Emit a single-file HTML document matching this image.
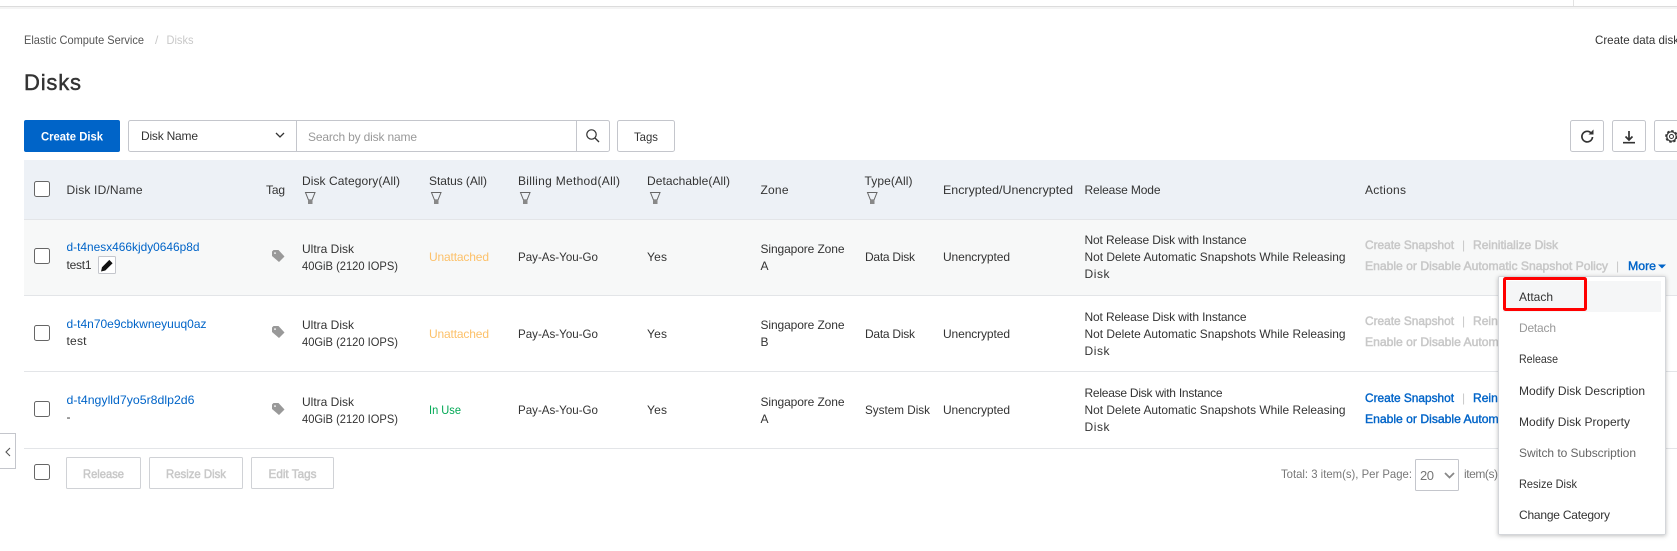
<!DOCTYPE html>
<html><head><meta charset="utf-8"><title>Disks</title>
<style>
html,body{margin:0;padding:0;background:#fff;width:1677px;height:551px;overflow:hidden}
svg{display:block}
text{font-family:"Liberation Sans",sans-serif;font-size:12px;fill:#333;white-space:pre}
.l{fill:#0064c8}.d{fill:#c8c8c8}
.dm{fill:#c8c8c8;stroke:#c8c8c8;stroke-width:.5px}
.lm{fill:#0064c8;stroke:#0064c8;stroke-width:.4px}
.b{fill:#fff;stroke:#c4c6cc}
.cb{fill:#fff;stroke:#666;rx:2px}
</style></head><body>
<svg width="1677" height="551" viewBox="0 0 1677 551" xmlns="http://www.w3.org/2000/svg">
<defs>
<filter id="s" x="-10%" y="-10%" width="120%" height="120%"><feDropShadow dx="0" dy="1" stdDeviation="2" flood-color="#000" flood-opacity=".25"/></filter>
<g id="fn"><path d="M.5.5H10L7 8H3.5Z" fill="none" stroke="#666" stroke-width="1"/><rect x="3" y="8" width="4.5" height="4" fill="#888"/></g>
<path id="tg" d="M0 1.5 1.5 0H6.5L12.5 6.5 7 12 0 6Z M3 2.200a.9.9 0 1 0 .01 0Z" fill="#999" fill-rule="evenodd"/>
</defs>
<rect x="0" y="6" width="1677" height="1" fill="#dcdcdc"/><rect y="7" width="1677" height="2" fill="#f4f4f4"/>
<rect x="1573" y="0" width="1" height="6" fill="#e3e3e3"/>

<text x="24" y="44" textLength="120" lengthAdjust="spacingAndGlyphs" style="fill:#555">Elastic Compute Service</text>
<text x="155" y="44" class="d">/</text>
<text x="166.500" y="44" textLength="27" lengthAdjust="spacingAndGlyphs" class="d">Disks</text>
<text x="1595" y="44" textLength="84" lengthAdjust="spacingAndGlyphs">Create data disk</text>
<text x="24" y="90" textLength="57" style="font-size:22px;stroke:#333;stroke-width:.45px">Disks</text>

<rect x="24" y="120" width="96" height="32" rx="2" fill="#0064c8"/>
<text x="41" y="140.500" textLength="62" lengthAdjust="spacingAndGlyphs" style="fill:#fff;font-weight:bold">Create Disk</text>
<rect x="128.500" y="120.500" width="481" height="31" rx="2" class="b"/>
<path d="M296.500 120v32M576.500 120v32" stroke="#c4c6cc"/>
<text x="141" y="140" textLength="57">Disk Name</text>
<path d="M276 133l4 4 4-4" fill="none" stroke="#333" stroke-width="1.300"/>
<text x="308" y="141" textLength="109" style="fill:#999">Search by disk name</text>
<circle cx="591.500" cy="134.500" r="4.700" fill="none" stroke="#333" stroke-width="1.200"/><path d="M595 138l4 4" stroke="#333" stroke-width="1.300"/>
<rect x="617.500" y="120.500" width="57" height="31" rx="2" class="b"/>
<text x="634" y="141" textLength="24" lengthAdjust="spacingAndGlyphs">Tags</text>

<rect x="1570.500" y="120.500" width="33" height="31" rx="2" class="b"/>
<path d="M1591.500 133.500a5.300 5.300 0 1 0 1 3.500" fill="none" stroke="#333" stroke-width="1.700"/><path d="M1588.500 134.500h5v-5z" fill="#333"/>
<rect x="1612.500" y="120.500" width="33" height="31" rx="2" class="b"/>
<path d="M1629 131v9M1625.500 136.500l3.500 3.500 3.500-3.500M1623 142.700h12" fill="none" stroke="#333" stroke-width="1.700"/>
<rect x="1654.500" y="120.500" width="33" height="31" rx="2" class="b"/>
<circle cx="1671.500" cy="136.500" r="2" fill="none" stroke="#333"/><circle cx="1671.500" cy="136.500" r="4.700" fill="none" stroke="#333" stroke-width="1.200"/><circle cx="1671.500" cy="136.500" r="5.700" fill="none" stroke="#333" stroke-width="1.300" stroke-dasharray="2.500 1.900"/>

<rect x="24" y="160" width="1653" height="59" fill="#edf1f6"/>
<rect x="24" y="219" width="1653" height="76" fill="#f7f8f8"/>
<path d="M24 219.500H1677M24 295.500H1677M24 371.500H1677M24 448.500H1677" stroke="#e3e5e8"/>

<rect x="34.500" y="181.500" width="15" height="15" class="cb"/>
<rect x="34.500" y="248.500" width="15" height="15" class="cb"/>
<rect x="34.500" y="325.500" width="15" height="15" class="cb"/>
<rect x="34.500" y="401.500" width="15" height="15" class="cb"/>
<rect x="34.500" y="464.500" width="15" height="15" class="cb"/>

<text x="66.500" y="194" textLength="76">Disk ID/Name</text>
<text x="266" y="194" textLength="19">Tag</text>
<text x="302" y="185" textLength="98">Disk Category(All)</text><use href="#fn" x="305" y="192"/>
<text x="429" y="185" textLength="58">Status (All)</text><use href="#fn" x="431" y="192"/>
<text x="518" y="185" textLength="102">Billing Method(All)</text><use href="#fn" x="520" y="192"/>
<text x="647" y="185" textLength="83">Detachable(All)</text><use href="#fn" x="650" y="192"/>
<text x="760.500" y="194" textLength="28">Zone</text>
<text x="864.500" y="185" textLength="48">Type(All)</text><use href="#fn" x="867" y="192"/>
<text x="943" y="194" textLength="130" lengthAdjust="spacingAndGlyphs">Encrypted/Unencrypted</text>
<text x="1084.500" y="194" textLength="76">Release Mode</text>
<text x="1365" y="194" textLength="41">Actions</text>

<!-- row 1 -->
<text x="66.500" y="251" textLength="133" lengthAdjust="spacingAndGlyphs" class="l">d-t4nesx466kjdy0646p8d</text>
<text x="66.500" y="269" textLength="25">test1</text>
<rect x="98.500" y="256.500" width="17" height="17" rx="1" fill="#fff" stroke="#c4c6cc"/>
<path d="M101 271.500l1-4.300 7.300-7.300 3.300 3.300-7.300 7.300z" fill="#111"/>
<use href="#tg" x="272" y="250"/>
<text x="302" y="253" textLength="52">Ultra Disk</text>
<text x="302" y="270" textLength="96" lengthAdjust="spacingAndGlyphs">40GiB (2120 IOPS)</text>
<text x="429" y="261" textLength="60" style="fill:#fcc16a">Unattached</text>
<text x="518" y="261" textLength="80" lengthAdjust="spacingAndGlyphs">Pay-As-You-Go</text>
<text x="647" y="261" textLength="20">Yes</text>
<text x="760.500" y="253" textLength="84">Singapore Zone</text>
<text x="760.500" y="270">A</text>
<text x="865" y="261" textLength="50">Data Disk</text>
<text x="943" y="261" textLength="67">Unencrypted</text>
<text x="1084.500" y="244" textLength="162">Not Release Disk with Instance</text>
<text x="1084.500" y="261" textLength="261" lengthAdjust="spacingAndGlyphs">Not Delete Automatic Snapshots While Releasing</text>
<text x="1084.500" y="278" textLength="25">Disk</text>
<text x="1365" y="249" textLength="89" lengthAdjust="spacingAndGlyphs" class="dm">Create Snapshot</text>
<text x="1462" y="249" class="d">|</text>
<text x="1473" y="249" textLength="85" lengthAdjust="spacingAndGlyphs" class="dm">Reinitialize Disk</text>
<text x="1365" y="270" textLength="243" lengthAdjust="spacingAndGlyphs" class="dm">Enable or Disable Automatic Snapshot Policy</text>
<text x="1616" y="270" class="d">|</text>
<text x="1628" y="270" textLength="28" lengthAdjust="spacingAndGlyphs" class="lm">More</text>
<path d="M1658 264.500h8l-4 4z" fill="#0064c8"/>

<!-- row 2 -->
<text x="66.500" y="328" textLength="140" lengthAdjust="spacingAndGlyphs" class="l">d-t4n70e9cbkwneyuuq0az</text>
<text x="66.500" y="345" textLength="20">test</text>
<use href="#tg" x="272" y="326"/>
<text x="302" y="329" textLength="52">Ultra Disk</text>
<text x="302" y="346" textLength="96" lengthAdjust="spacingAndGlyphs">40GiB (2120 IOPS)</text>
<text x="429" y="338" textLength="60" style="fill:#fcc16a">Unattached</text>
<text x="518" y="338" textLength="80" lengthAdjust="spacingAndGlyphs">Pay-As-You-Go</text>
<text x="647" y="338" textLength="20">Yes</text>
<text x="760.500" y="329" textLength="84">Singapore Zone</text>
<text x="760.500" y="346">B</text>
<text x="865" y="338" textLength="50">Data Disk</text>
<text x="943" y="338" textLength="67">Unencrypted</text>
<text x="1084.500" y="321" textLength="162">Not Release Disk with Instance</text>
<text x="1084.500" y="338" textLength="261" lengthAdjust="spacingAndGlyphs">Not Delete Automatic Snapshots While Releasing</text>
<text x="1084.500" y="355" textLength="25">Disk</text>
<text x="1365" y="325" textLength="89" lengthAdjust="spacingAndGlyphs" class="dm">Create Snapshot</text>
<text x="1462" y="325" class="d">|</text>
<text x="1473" y="325" textLength="85" lengthAdjust="spacingAndGlyphs" class="dm">Reinitialize Disk</text>
<text x="1365" y="346" textLength="243" lengthAdjust="spacingAndGlyphs" class="dm">Enable or Disable Automatic Snapshot Policy</text>

<!-- row 3 -->
<text x="66.500" y="404" textLength="128" lengthAdjust="spacingAndGlyphs" class="l">d-t4ngylld7yo5r8dlp2d6</text>
<text x="66.500" y="421">-</text>
<use href="#tg" x="272" y="403"/>
<text x="302" y="406" textLength="52">Ultra Disk</text>
<text x="302" y="423" textLength="96" lengthAdjust="spacingAndGlyphs">40GiB (2120 IOPS)</text>
<text x="429" y="414" textLength="32" lengthAdjust="spacingAndGlyphs" style="fill:#00a854">In Use</text>
<text x="518" y="414" textLength="80" lengthAdjust="spacingAndGlyphs">Pay-As-You-Go</text>
<text x="647" y="414" textLength="20">Yes</text>
<text x="760.500" y="406" textLength="84">Singapore Zone</text>
<text x="760.500" y="423">A</text>
<text x="865" y="414" textLength="65" lengthAdjust="spacingAndGlyphs">System Disk</text>
<text x="943" y="414" textLength="67">Unencrypted</text>
<text x="1084.500" y="397" textLength="138">Release Disk with Instance</text>
<text x="1084.500" y="414" textLength="261" lengthAdjust="spacingAndGlyphs">Not Delete Automatic Snapshots While Releasing</text>
<text x="1084.500" y="431" textLength="25">Disk</text>
<text x="1365" y="402" textLength="89" lengthAdjust="spacingAndGlyphs" class="lm">Create Snapshot</text>
<text x="1462" y="402" class="d">|</text>
<text x="1473" y="402" textLength="85" lengthAdjust="spacingAndGlyphs" class="lm">Reinitialize Disk</text>
<text x="1365" y="423" textLength="243" lengthAdjust="spacingAndGlyphs" class="lm">Enable or Disable Automatic Snapshot Policy</text>

<!-- footer -->
<rect x="66.500" y="457.500" width="74" height="31" rx="1" fill="#fff" stroke="#d0d2d6"/>
<text x="83" y="478" textLength="41" lengthAdjust="spacingAndGlyphs" class="dm">Release</text>
<rect x="149.500" y="457.500" width="93" height="31" rx="1" fill="#fff" stroke="#d0d2d6"/>
<text x="166" y="478" textLength="60" lengthAdjust="spacingAndGlyphs" class="dm">Resize Disk</text>
<rect x="251.500" y="457.500" width="82" height="31" rx="1" fill="#fff" stroke="#d0d2d6"/>
<text x="268.500" y="478" textLength="48" lengthAdjust="spacingAndGlyphs" class="dm">Edit Tags</text>
<text x="1281" y="478" textLength="131" lengthAdjust="spacingAndGlyphs" style="fill:#777">Total: 3 item(s), Per Page:</text>
<rect x="1415.500" y="459.500" width="43" height="31" rx="1" fill="#fff" stroke="#c4c6cc"/>
<text x="1420" y="480" textLength="14" style="fill:#777;font-size:13px">20</text>
<path d="M1445 473l4.500 4.500 4.500-4.500" fill="none" stroke="#888" stroke-width="1.800"/>
<text x="1464" y="478" textLength="34" style="fill:#777">item(s)</text>

<!-- collapse handle -->
<path d="M0 433.500H15.500V468.500H0" fill="#fff" stroke="#c4c6cc"/>
<path d="M10 448l-4 4 4 4" fill="none" stroke="#555" stroke-width="1.100"/>

<!-- menu -->
<rect x="1498.500" y="276.500" width="167" height="258" rx="1" fill="#fff" stroke="#d4d6da" filter="url(#s)"/>
<rect x="1503" y="281" width="158" height="31" fill="#f5f6f7"/>
<text x="1519" y="301" textLength="34">Attach</text>
<text x="1519" y="332" textLength="37" style="fill:#999">Detach</text>
<text x="1519" y="363" textLength="39" lengthAdjust="spacingAndGlyphs">Release</text>
<text x="1519" y="395" textLength="126">Modify Disk Description</text>
<text x="1519" y="426" textLength="111">Modify Disk Property</text>
<text x="1519" y="457" textLength="117" style="fill:#666">Switch to Subscription</text>
<text x="1519" y="488" textLength="58" lengthAdjust="spacingAndGlyphs">Resize Disk</text>
<text x="1519" y="519" textLength="91">Change Category</text>
<rect x="1504.500" y="278.500" width="81" height="31" rx="1" fill="none" stroke="#f00" stroke-width="3"/>
</svg>
</body></html>
